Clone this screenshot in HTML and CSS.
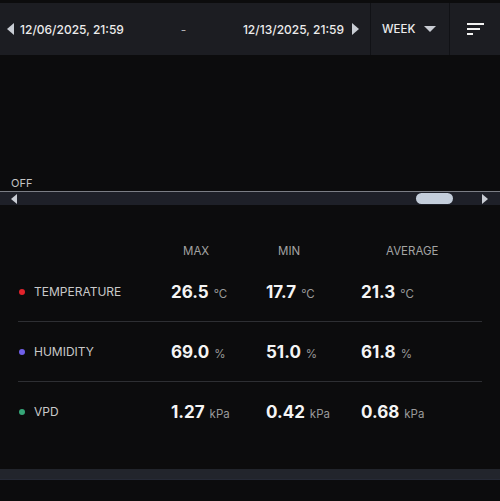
FILE: index.html
```html
<!DOCTYPE html>
<html lang="en">
	<head>
		<meta charset="utf-8">
		<title>Sensor history</title>
		<link rel="stylesheet" href="styles.css">
	</head>
	<body>
		<!-- Date range bar -->
		<header class="topbar">
			<div class="range">
				<span class="arrow arrowLeft"></span>
				<span class="date">12/06/2025, 21:59</span>
				<span class="dash">-</span>
				<span class="date">12/13/2025, 21:59</span>
				<span class="arrow arrowRight"></span>
			</div>
			<div class="period">
				<span>WEEK</span>
				<span class="caret"></span>
			</div>
			<div class="menu">
				<svg width="18" height="14" viewBox="0 0 18 14">
					<rect x="0" y="1" width="17" height="2" fill="#f2f2f2"></rect>
					<rect x="0" y="6" width="13" height="2" fill="#f2f2f2"></rect>
					<rect x="0" y="11" width="6" height="2" fill="#f2f2f2"></rect>
				</svg>
			</div>
		</header>

		<!-- Chart area (empty) -->
		<section class="chart">
			<div class="offLabel">OFF</div>
			<div class="scroller">
				<span class="arrow arrowLeft small"></span>
				<span class="thumb"></span>
				<span class="arrow arrowRight small"></span>
			</div>
		</section>

		<!-- Stats -->
		<section class="stats">
			<div class="statHead">
				<span></span>
				<span class="colMax">MAX</span>
				<span class="colMin">MIN</span>
				<span class="colAvg">AVERAGE</span>
			</div>
			<div class="statRow">
				<span class="label"><i class="dot red"></i>TEMPERATURE</span>
				<span class="value">26.5<small>°C</small></span>
				<span class="value">17.7<small>°C</small></span>
				<span class="value">21.3<small>°C</small></span>
			</div>
			<div class="statRow">
				<span class="label"><i class="dot purple"></i>HUMIDITY</span>
				<span class="value">69.0<small>%</small></span>
				<span class="value">51.0<small>%</small></span>
				<span class="value">61.8<small>%</small></span>
			</div>
			<div class="statRow last">
				<span class="label"><i class="dot green"></i>VPD</span>
				<span class="value">1.27<small>kPa</small></span>
				<span class="value">0.42<small>kPa</small></span>
				<span class="value">0.68<small>kPa</small></span>
			</div>
		</section>

		<div class="bottomBar"></div>
	</body>
</html>
```

FILE: styles.css
```css
body {
	margin: 0;
	background-color: #0c0c0d;
	font-family: Inter, "Noto Sans", sans-serif;
	color: #e8e8e8;
	width: 500px;
	height: 501px;
	overflow: hidden;
}

.topbar {
	margin-top: 3px;
	height: 52px;
	background-color: #1c1d22;
	display: flex;
	align-items: stretch;
}

.range {
	flex: 1;
	min-width: 0;
	display: flex;
	align-items: center;
	padding: 0 11px 0 7px;
	white-space: nowrap;
}

.date {
	font-size: 12px;
	font-weight: 500;
	color: #ececec;
}

.range .arrowLeft {
	margin-right: 6px;
}

.range .arrowRight {
	margin-left: 8px;
}

.dash {
	flex: 1;
	text-align: center;
	color: #b0b0b0;
	font-size: 12px;
}

.arrow {
	flex: none;
	width: 0;
	height: 0;
	border-top: 6px solid transparent;
	border-bottom: 6px solid transparent;
}

.arrowLeft {
	border-right: 7px solid #c9cdd4;
}

.arrowRight {
	border-left: 7px solid #c9cdd4;
}

.arrow.small {
	border-top-width: 5px;
	border-bottom-width: 5px;
}

.arrowLeft.small {
	border-right-width: 6px;
}

.arrowRight.small {
	border-left-width: 6px;
}

.period {
	flex: none;
	width: 79px;
	border-left: 1px solid #111216;
	display: flex;
	align-items: center;
	padding-left: 11px;
	box-sizing: border-box;
	font-size: 11.5px;
	font-weight: 500;
	color: #ececec;
}

.caret {
	margin-left: 9px;
	width: 0;
	height: 0;
	border-left: 6px solid transparent;
	border-right: 6px solid transparent;
	border-top: 6px solid #c9cdd4;
}

.menu {
	flex: none;
	width: 51px;
	box-sizing: border-box;
	border-left: 1px solid #111216;
	display: flex;
	align-items: center;
	padding-left: 17px;
}

.chart {
	height: 150px;
	display: flex;
	flex-direction: column;
	justify-content: flex-end;
}

.offLabel {
	font-size: 11px;
	line-height: 13px;
	color: #c4c4c4;
	padding-left: 11px;
	margin-bottom: 1px;
}

.scroller {
	border-top: 1px solid #7b7e85;
	height: 13px;
	background-color: #1e2028;
	display: flex;
	align-items: center;
	padding: 0 12px 0 11px;
}

.thumb {
	margin-left: auto;
	margin-right: 29px;
	width: 37px;
	height: 11px;
	border-radius: 6px;
	background-color: #c4cedb;
}

.stats {
	padding: 0 18px;
	margin-top: 35px;
}

.statHead,
.statRow {
	display: grid;
	grid-template-columns: 153px 95px 95px 1fr;
	align-items: center;
}

.statHead {
	height: 22px;
	font-size: 11.5px;
	color: #a3a3a3;
}

.colMax,
.colMin {
	padding-left: 12px;
}

.colAvg {
	padding-left: 25px;
}

.statRow {
	height: 59px;
	border-bottom: 1px solid #2e2f33;
}

.statRow.last {
	border-bottom: none;
}

.label {
	display: flex;
	align-items: center;
	font-size: 12px;
	color: #c9c9c9;
}

.dot {
	width: 6px;
	height: 6px;
	border-radius: 50%;
	margin: 0 9px 0 1px;
}

.red {
	background-color: #e2232b;
}

.purple {
	background-color: #6f5fe8;
}

.green {
	background-color: #36a678;
}

.value {
	font-size: 17px;
	font-weight: 700;
	color: #f5f5f5;
}

.value small {
	font-size: 11.5px;
	font-weight: 400;
	color: #9a9a9a;
	margin-left: 5px;
}

.bottomBar {
	margin-top: 28px;
	height: 10px;
	background-color: #22252c;
	border-bottom: 1px solid #262a36;
}
```
